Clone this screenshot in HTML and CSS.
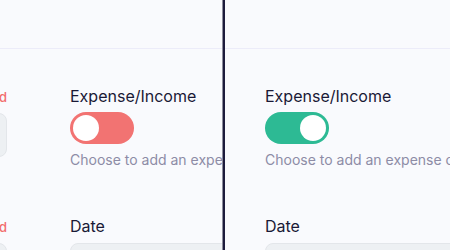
FILE: index.html
```html
<!DOCTYPE html>
<html lang="en">
<head>
  <meta charset="UTF-8" />
  <title>Expense toggle states</title>
  <link rel="stylesheet" href="styles.css">
</head>
<body>
  <div class="compare">

    <!-- expense state -->
    <div class="panel panel-left">
      <div class="topbar"></div>
      <div class="form">
        <div class="field">
          <div class="label-row"><span class="label">Amount</span><span class="error">Required</span></div>
          <div class="input"></div>
        </div>
        <div class="field">
          <div class="label-row"><span class="label">Expense/Income</span></div>
          <div class="switch expense"><span class="knob"></span></div>
          <p class="hint">Choose to add an expense or an income</p>
        </div>
        <div class="field">
          <div class="label-row"><span class="label">Category</span><span class="error">Required</span></div>
          <div class="input"></div>
        </div>
        <div class="field">
          <div class="label-row"><span class="label">Date</span></div>
          <div class="input"></div>
        </div>
      </div>
    </div>

    <div class="divider"></div>

    <!-- income state -->
    <div class="panel panel-right">
      <div class="topbar"></div>
      <div class="form">
        <div class="field">
          <div class="label-row"><span class="label">Amount</span></div>
          <div class="input"></div>
        </div>
        <div class="field">
          <div class="label-row"><span class="label">Expense/Income</span></div>
          <div class="switch income"><span class="knob"></span></div>
          <p class="hint">Choose to add an expense or an income</p>
        </div>
        <div class="field">
          <div class="label-row"><span class="label">Category</span></div>
          <div class="input"></div>
        </div>
        <div class="field">
          <div class="label-row"><span class="label">Date</span></div>
          <div class="input"></div>
        </div>
      </div>
    </div>

  </div>
</body>
</html>
```

FILE: styles.css
```css
* {
  box-sizing: border-box;
  font-family: Inter, 'Noto Sans', sans-serif;
}

body {
  margin: 0;
  background-color: #f9fafd;
}

.compare {
  display: flex;
  height: 250px;
  overflow: hidden;
}

.panel {
  overflow: hidden;
  background: #f9fafd;
}

.panel-left {
  width: 222px;
}

.panel-right {
  flex: 1;
}

.divider {
  width: 3px;
  background: #1d1b3c;
  border-left: 1px solid #8c8c9c;
}

.topbar {
  height: 49px;
  border-bottom: 1px solid #ececf9;
}

.form {
  display: grid;
  grid-template-columns: 200px 200px;
  column-gap: 63px;
  row-gap: 44px;
  padding-top: 35px;
  width: 463px;
}

.panel-left .form {
  margin-left: -193px;
}

.panel-right .form {
  margin-left: -223px;
}

.field {
  display: flex;
  flex-direction: column;
  min-width: 0;
}

.label-row {
  display: flex;
  justify-content: space-between;
  align-items: baseline;
  height: 24px;
  white-space: nowrap;
}

.label {
  font-size: 16px;
  line-height: 24px;
  color: #1a1936;
}

.error {
  font-size: 13px;
  font-weight: 500;
  color: #f26d6d;
}

.input {
  margin-top: 5px;
  height: 44px;
  background: #edf0f3;
  border: 1px solid #e3e6ea;
  border-radius: 8px;
}

.switch {
  margin-top: 4px;
  width: 64px;
  height: 32px;
  border-radius: 16px;
  padding: 3px;
  display: flex;
}

.switch .knob {
  width: 26px;
  height: 26px;
  border-radius: 50%;
  background: #fff;
}

.switch.expense {
  background: #f27372;
}

.switch.income {
  background: #2dba94;
  justify-content: flex-end;
}

.hint {
  margin: 6px 0 0;
  font-size: 14px;
  line-height: 20px;
  color: #8d8ca6;
  white-space: nowrap;
}
```
